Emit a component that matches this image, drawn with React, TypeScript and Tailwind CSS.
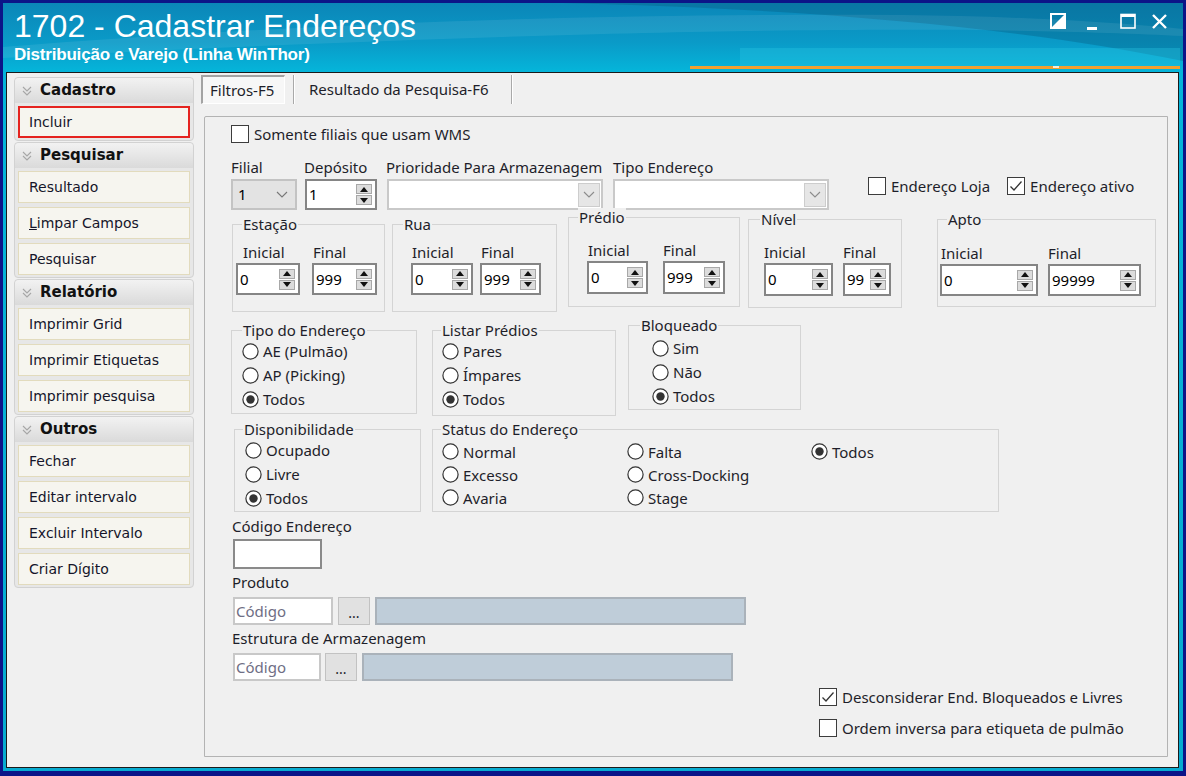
import React from "react";

const FORM = "[font-family:'Noto_Sans','Open_Sans',sans-serif]";
const SIDE = "[font-family:'DejaVu_Sans',sans-serif]";

function Chev({ color = "#8a8a8a" }: { color?: string }) {
  return (
    <svg width="12" height="7" viewBox="0 0 12 7">
      <polyline points="1,1 6,6 11,1" fill="none" stroke={color} strokeWidth="1.1" />
    </svg>
  );
}

function Check({ checked = false, label, cls = "" }: { checked?: boolean; label: string; cls?: string }) {
  return (
    <div className={`flex items-center gap-[5px] ${cls}`}>
      <div className="w-[18px] h-[18px] bg-white border border-[#3c3c3c] flex items-center justify-center shrink-0">
        {checked && (
          <svg width="14" height="12" viewBox="0 0 14 12">
            <polyline points="1.5,6.5 5,10 12.5,1.5" fill="none" stroke="#333" strokeWidth="1.3" />
          </svg>
        )}
      </div>
      <span className="text-[15px] leading-[18px] text-[#1e1e2a] whitespace-nowrap">{label}</span>
    </div>
  );
}

function Radio({ checked = false, label }: { checked?: boolean; label: string }) {
  return (
    <div className="flex items-center gap-[4px] h-full">
      <svg width="17" height="17" viewBox="0 0 17 17" className="shrink-0">
        <circle cx="8.5" cy="8.5" r="7.6" fill="#fff" stroke="#333" strokeWidth="1.2" />
        {checked && <circle cx="8.5" cy="8.5" r="4.2" fill="#333" />}
      </svg>
      <span className="text-[15px] leading-[18px] text-[#1e1e2a] whitespace-nowrap">{label}</span>
    </div>
  );
}

function SpinBtns() {
  return (
    <div className="flex flex-col gap-[1px] shrink-0">
      <div className="w-[16px] h-[10px] bg-[#dcdcdc] border border-[#a8a8a8] flex items-center justify-center">
        <svg width="8" height="5" viewBox="0 0 8 5">
          <polygon points="0,5 4,0 8,5" fill="#111" />
        </svg>
      </div>
      <div className="w-[16px] h-[10px] bg-[#dcdcdc] border border-[#a8a8a8] flex items-center justify-center">
        <svg width="8" height="5" viewBox="0 0 8 5">
          <polygon points="0,0 8,0 4,5" fill="#111" />
        </svg>
      </div>
    </div>
  );
}

function Spin({ value, w, h }: { value: string; w: string; h: string }) {
  return (
    <div className={`${w} ${h} mt-[2px] bg-white border-2 border-[#858585] flex items-center justify-between pl-[2px] pr-[3px]`}>
      <span className="text-[15px] text-black leading-none">{value}</span>
      <SpinBtns />
    </div>
  );
}

type Col = { label: string; value: string; w: string; lml: string };

function Range({
  legend,
  box,
  lpos,
  inner,
  gap,
  sh,
  cols,
}: {
  legend: string;
  box: string;
  lpos: string;
  inner: string;
  gap: string;
  sh: string;
  cols: Col[];
}) {
  return (
    <div className={`relative shrink-0 border border-[#d4d4d4] ${box}`}>
      <span className={`absolute -top-[10px] ${lpos} px-[1px] bg-[#f0f0f0] leading-[18px] text-[15px] text-[#1e1e2a]`}>
        {legend}
      </span>
      <div className={`flex ${inner} ${gap}`}>
        {cols.map((c) => (
          <div key={c.label} className="flex flex-col">
            <span className={`leading-[18px] text-[15px] text-[#1e1e2a] ${c.lml}`}>{c.label}</span>
            <Spin value={c.value} w={c.w} h={sh} />
          </div>
        ))}
      </div>
    </div>
  );
}

function RGroup({
  legend,
  box,
  lpos,
  inner,
  items,
  checked,
}: {
  legend: string;
  box: string;
  lpos: string;
  inner: string;
  items: string[];
  checked: number;
}) {
  return (
    <div className={`relative shrink-0 border border-[#d4d4d4] ${box}`}>
      <span className={`absolute -top-[10px] ${lpos} px-[1px] bg-[#f0f0f0] leading-[18px] text-[15px] text-[#1e1e2a]`}>
        {legend}
      </span>
      <div className={`flex flex-col ${inner}`}>
        {items.map((it, i) => (
          <div key={it} className="h-[24px]">
            <Radio label={it} checked={i === checked} />
          </div>
        ))}
      </div>
    </div>
  );
}

function SideSection({ title, items }: { title: string; items: React.ReactNode[] }) {
  return (
    <div className="w-[180px] rounded-[4px] border border-[#d2d2d2] bg-[#e7e7e7]">
      <div className="h-[25px] flex items-center pl-[7px] gap-[8px] rounded-t-[4px] bg-[linear-gradient(180deg,#f2f2f2,#dadada)]">
        <svg width="10" height="10" viewBox="0 0 10 10">
          <polyline points="1,1 5,5 9,1" fill="none" stroke="#a6a6a6" strokeWidth="1.1" />
          <polyline points="1,5 5,9 9,5" fill="none" stroke="#a6a6a6" strokeWidth="1.1" />
        </svg>
        <span className="text-[15px] font-bold text-[#111]">{title}</span>
      </div>
      <div className="flex flex-col gap-[4px] px-[3px] pt-[3px] pb-[2px]">{items}</div>
    </div>
  );
}

function SideBtn({ children, active = false }: { children: React.ReactNode; active?: boolean }) {
  return (
    <div
      className={
        active
          ? "h-[32px] flex items-center pl-[9px] bg-[#f6f5ef] border-2 border-[#e5231f] text-[14px] text-[#15152a]"
          : "h-[32px] flex items-center pl-[10px] bg-[#f6f5ef] border border-[#e2dbbd] text-[14px] text-[#15152a]"
      }
    >
      {children}
    </div>
  );
}

export default function App() {
  return (
    <div className="w-[1186px] h-[776px] bg-[#0c1488] pt-[3px] px-[3px] pb-[5px] overflow-hidden">
      <div className="w-full h-full flex flex-col bg-[linear-gradient(180deg,#0b86b8_0px,#0a9bc8_40px,#05b5da_69px,#07abd0_100%)]">
        {/* Title bar */}
        <div className="relative h-[69px] shrink-0 flex justify-between">
          <svg className="absolute inset-0" width="1180" height="69" viewBox="0 0 1180 69">
            <path d="M560,0 C800,6 1000,22 1180,58 L1180,0 Z" fill="#05597f" opacity="0.35" />
            <path d="M0,44 C300,20 600,10 900,12 C1000,13 1100,18 1180,26 L1180,33 C1000,24 700,20 0,55 Z" fill="#ffffff" opacity="0.08" />
            <rect x="737" y="45" width="440" height="18" fill="#2cc6e2" opacity="0.35" />
            <rect x="687" y="63" width="490" height="3" fill="#f0a030" />
            <rect x="1050" y="63" width="6" height="2" fill="#ffffff" opacity="0.8" />
          </svg>
          <div className="relative pl-[11px] pt-[5px] flex flex-col [font-family:'Liberation_Sans',Arial,sans-serif] text-white">
            <span className="text-[32px] leading-[36px]">1702 - Cadastrar Endereços</span>
            <span className="text-[17px] leading-[20px] font-bold mt-[1px] tracking-[-0.2px]">Distribuição e Varejo (Linha WinThor)</span>
          </div>
          <div className="relative pt-[10px] pr-[15px]">
            <svg width="118" height="17" viewBox="0 0 118 17">
              <rect x="1" y="1" width="14" height="14" fill="none" stroke="#fff" strokeWidth="2" />
              <polygon points="15,1 15,15 1,15" fill="#fff" />
              <rect x="37" y="14" width="10" height="3" fill="#fff" />
              <rect x="71" y="1.5" width="14" height="13.5" fill="none" stroke="#fff" strokeWidth="1.6" />
              <rect x="71" y="1" width="14" height="3" fill="#fff" />
              <path d="M103,2 L116,15 M116,2 L103,15" stroke="#fff" strokeWidth="2.4" />
            </svg>
          </div>
        </div>

        {/* Content */}
        <div className="flex-1 ml-[3px] mr-[4px] mb-[3px] border border-[#1a1a1a] bg-[#f0f0f0] flex">
          {/* Sidebar */}
          <div className={`pl-[7px] pt-[4px] flex flex-col gap-[1px] ${SIDE}`}>
            <SideSection title="Cadastro" items={[<SideBtn key="a" active>Incluir</SideBtn>]} />
            <SideSection
              title="Pesquisar"
              items={[
                <SideBtn key="a">Resultado</SideBtn>,
                <SideBtn key="b">
                  <span className="underline">L</span>impar Campos
                </SideBtn>,
                <SideBtn key="c">Pesquisar</SideBtn>,
              ]}
            />
            <SideSection
              title="Relatório"
              items={[
                <SideBtn key="a">Imprimir Grid</SideBtn>,
                <SideBtn key="b">Imprimir Etiquetas</SideBtn>,
                <SideBtn key="c">Imprimir pesquisa</SideBtn>,
              ]}
            />
            <SideSection
              title="Outros"
              items={[
                <SideBtn key="a">Fechar</SideBtn>,
                <SideBtn key="b">Editar intervalo</SideBtn>,
                <SideBtn key="c">Excluir Intervalo</SideBtn>,
                <SideBtn key="d">Criar Dígito</SideBtn>,
              ]}
            />
          </div>

          {/* Main */}
          <div className={`flex flex-col ${FORM} text-[#1e1e2a]`}>
            {/* Tabs */}
            <div className="flex h-[29px] mt-[2px] ml-[7px]">
              <div className="w-[84px] h-full flex items-center pl-[7px] bg-[#f7f7f7] border-t-2 border-l-2 border-[#a3a3a3] border-b border-r border-b-white border-r-white text-[15px] whitespace-nowrap">
                Filtros-F5
              </div>
              <div className="w-[8px]" />
              <div className="w-[2px] h-full border-l border-[#a9a9a9] border-r border-r-white" />
              <div className="w-[216px] h-full flex items-center pl-[14px] text-[15px] whitespace-nowrap">Resultado da Pesquisa-F6</div>
              <div className="w-[2px] h-full border-l border-[#a9a9a9] border-r border-r-white" />
            </div>

            {/* Panel */}
            <div className="mt-[12px] ml-[10px] w-[964px] h-[641px] border border-[#b3b3b3] rounded-tl-[2px] flex flex-col">
              <Check label="Somente filiais que usam WMS" cls="mt-[8px] ml-[26px]" />

              {/* Row 2 */}
              <div className="flex mt-[14px] ml-[26px] items-start">
                <div className="flex flex-col w-[66px]">
                  <span className="leading-[20px] text-[15px]">Filial</span>
                  <div className="mt-[2px] h-[31px] bg-[#e3e3e3] border-2 border-[#c3c3c3] flex items-center justify-between pl-[5px] pr-[7px]">
                    <span className="text-[15px] text-black">1</span>
                    <Chev color="#777" />
                  </div>
                </div>
                <div className="flex flex-col w-[72px] ml-[8px]">
                  <span className="leading-[20px] text-[15px] -ml-[1px]">Depósito</span>
                  <Spin value="1" w="w-[72px]" h="h-[31px]" />
                </div>
                <div className="flex flex-col w-[216px] ml-[10px]">
                  <span className="leading-[20px] text-[15px] -ml-[1px] whitespace-nowrap">Prioridade Para Armazenagem</span>
                  <div className="mt-[2px] h-[31px] bg-white border-2 border-[#c9c9c9] flex items-center justify-end pr-[1px]">
                    <div className="w-[22px] h-[24px] bg-[#e6e6e6] border border-[#cdcdcd] flex items-center justify-center">
                      <Chev color="#8c8c8c" />
                    </div>
                  </div>
                </div>
                <div className="flex flex-col w-[216px] ml-[10px]">
                  <span className="leading-[20px] text-[15px]">Tipo Endereço</span>
                  <div className="mt-[2px] h-[31px] bg-white border-2 border-[#c9c9c9] flex items-center justify-end pr-[1px]">
                    <div className="w-[22px] h-[24px] bg-[#e6e6e6] border border-[#cdcdcd] flex items-center justify-center">
                      <Chev color="#8c8c8c" />
                    </div>
                  </div>
                </div>
                <Check label="Endereço Loja" cls="ml-[39px] mt-[20px]" />
                <Check checked label="Endereço ativo" cls="ml-[17px] mt-[20px]" />
              </div>

              {/* Row 3 ranges */}
              <div className="flex items-start">
                <Range
                  legend="Estação"
                  box="ml-[27px] mt-[14px] w-[153px] h-[88px]"
                  lpos="left-[9px]"
                  inner="pl-[3px] pt-[18px]"
                  gap="gap-[12px]"
                  sh="h-[32px]"
                  cols={[
                    { label: "Inicial", value: "0", w: "w-[64px]", lml: "ml-[7px]" },
                    { label: "Final", value: "999", w: "w-[65px]", lml: "ml-[1px]" },
                  ]}
                />
                <Range
                  legend="Rua"
                  box="ml-[7px] mt-[14px] w-[165px] h-[88px]"
                  lpos="left-[10px]"
                  inner="pl-[18px] pt-[18px]"
                  gap="gap-[7px]"
                  sh="h-[32px]"
                  cols={[
                    { label: "Inicial", value: "0", w: "w-[62px]", lml: "ml-[1px]" },
                    { label: "Final", value: "999", w: "w-[61px]", lml: "ml-[1px]" },
                  ]}
                />
                <Range
                  legend="Prédio"
                  box="ml-[11px] mt-[7px] w-[172px] h-[90px]"
                  lpos="left-[9px]"
                  inner="pl-[18px] pt-[23px]"
                  gap="gap-[15px]"
                  sh="h-[33px]"
                  cols={[
                    { label: "Inicial", value: "0", w: "w-[61px]", lml: "ml-[1px]" },
                    { label: "Final", value: "999", w: "w-[62px]", lml: "ml-0" },
                  ]}
                />
                <Range
                  legend="Nível"
                  box="ml-[8px] mt-[9px] w-[154px] h-[89px]"
                  lpos="left-[11px]"
                  inner="pl-[15px] pt-[23px]"
                  gap="gap-[10px]"
                  sh="h-[33px]"
                  cols={[
                    { label: "Inicial", value: "0", w: "w-[69px]", lml: "ml-0" },
                    { label: "Final", value: "99", w: "w-[48px]", lml: "ml-0" },
                  ]}
                />
                <Range
                  legend="Apto"
                  box="ml-[35px] mt-[9px] w-[219px] h-[88px]"
                  lpos="left-[9px]"
                  inner="pl-[2px] pt-[24px]"
                  gap="gap-[10px]"
                  sh="h-[32px]"
                  cols={[
                    { label: "Inicial", value: "0", w: "w-[98px]", lml: "ml-[1px]" },
                    { label: "Final", value: "99999", w: "w-[93px]", lml: "ml-0" },
                  ]}
                />
              </div>

              {/* Row 4 radios */}
              <div className="flex items-start">
                <RGroup
                  legend="Tipo do Endereço"
                  box="ml-[26px] mt-[18px] w-[186px] h-[84px]"
                  lpos="left-[10px]"
                  inner="pl-[10px] pt-[8px]"
                  items={["AE (Pulmão)", "AP (Picking)", "Todos"]}
                  checked={2}
                />
                <RGroup
                  legend="Listar Prédios"
                  box="ml-[15px] mt-[18px] w-[184px] h-[86px]"
                  lpos="left-[8px]"
                  inner="pl-[9px] pt-[8px]"
                  items={["Pares", "Ímpares", "Todos"]}
                  checked={2}
                />
                <RGroup
                  legend="Bloqueado"
                  box="ml-[12px] mt-[13px] w-[173px] h-[85px]"
                  lpos="left-[11px]"
                  inner="pl-[23px] pt-[10px]"
                  items={["Sim", "Não", "Todos"]}
                  checked={2}
                />
              </div>

              {/* Row 5 */}
              <div className="flex items-start">
                <RGroup
                  legend="Disponibilidade"
                  box="ml-[29px] mt-[13px] w-[187px] h-[83px]"
                  lpos="left-[8px]"
                  inner="pl-[10px] pt-[8px]"
                  items={["Ocupado", "Livre", "Todos"]}
                  checked={2}
                />
                <div className="relative shrink-0 border border-[#d4d4d4] ml-[11px] mt-[13px] w-[567px] h-[83px]">
                  <span className="absolute -top-[10px] left-[8px] px-[1px] bg-[#f0f0f0] leading-[18px] text-[15px]">
                    Status do Endereço
                  </span>
                  <div className="grid grid-cols-[185px_184px_1fr] auto-rows-[23px] pl-[9px] pt-[10px]">
                    <Radio label="Normal" />
                    <Radio label="Falta" />
                    <Radio label="Todos" checked />
                    <Radio label="Excesso" />
                    <Radio label="Cross-Docking" />
                    <div />
                    <Radio label="Avaria" />
                    <Radio label="Stage" />
                    <div />
                  </div>
                </div>
              </div>

              {/* Row 6 */}
              <span className="ml-[27px] mt-[5px] leading-[18px] text-[15px]">Código Endereço</span>
              <div className="ml-[28px] mt-[4px] w-[89px] h-[30px] bg-white border-2 border-[#8a8a8a]" />
              <span className="ml-[27px] mt-[4px] leading-[18px] text-[15px]">Produto</span>
              <div className="flex ml-[28px] mt-[6px] h-[28px]">
                <div className="w-[100px] h-full bg-white border-2 border-[#c8c8c8] flex items-center pl-[1px] text-[15px] text-[#6e6e84]">
                  Código
                </div>
                <div className="ml-[5px] w-[32px] h-full bg-[#e1e1e1] border border-[#c2c2c2] flex items-end justify-center pb-[4px] text-[14px] leading-none">
                  ...
                </div>
                <div className="ml-[5px] w-[371px] h-full bg-[#bfcdd9] border-2 border-[#aab2ba]" />
              </div>
              <span className="ml-[27px] mt-[4px] leading-[18px] text-[15px]">Estrutura de Armazenagem</span>
              <div className="flex ml-[28px] mt-[6px] h-[28px]">
                <div className="w-[88px] h-full bg-white border-2 border-[#c8c8c8] flex items-center pl-[1px] text-[15px] text-[#6e6e84]">
                  Código
                </div>
                <div className="ml-[4px] w-[32px] h-full bg-[#e1e1e1] border border-[#c2c2c2] flex items-end justify-center pb-[4px] text-[14px] leading-none">
                  ...
                </div>
                <div className="ml-[5px] w-[371px] h-full bg-[#bfcdd9] border-2 border-[#aab2ba]" />
              </div>

              <div className="flex flex-col gap-[13px] ml-[614px] mt-[7px]">
                <Check checked label="Desconsiderar End. Bloqueados e Livres" />
                <Check label="Ordem inversa para etiqueta de pulmão" />
              </div>
            </div>
          </div>
        </div>
      </div>
    </div>
  );
}
